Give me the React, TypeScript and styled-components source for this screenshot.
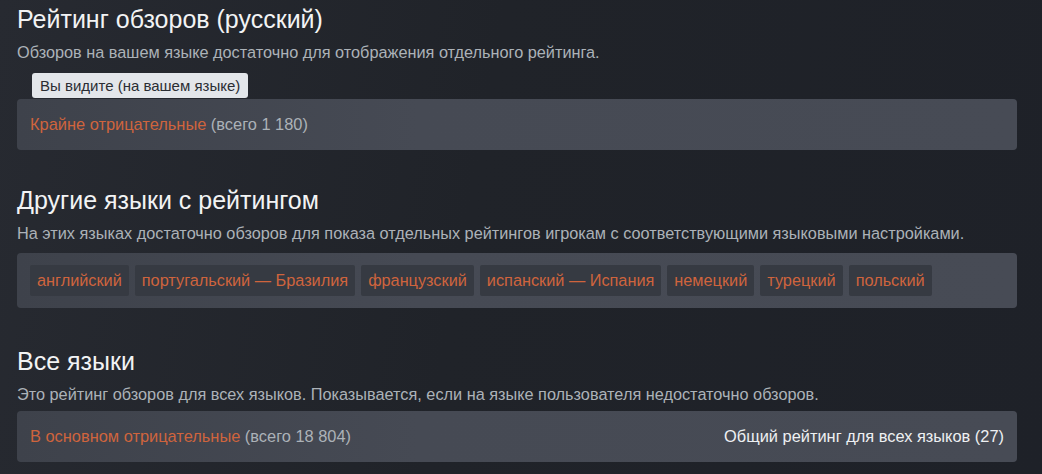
import styled, { createGlobalStyle } from "styled-components";

const GlobalStyle = createGlobalStyle`
  html, body {
    margin: 0;
    padding: 0;
    background: linear-gradient(100deg, #272a31 0%, #202329 45%, #1e2128 100%);
    min-height: 100%;
  }
  body {
    font-family: "Liberation Sans", Arial, sans-serif;
    color: #acb2b8;
  }
`;

const Page = styled.div`
  width: 1042px;
  height: 474px;
  box-sizing: border-box;
  padding: 4px 25px 0 17px;
  overflow: hidden;
`;

const Section = styled.section<{ $gap?: number }>`
  display: flex;
  flex-direction: column;
  margin-bottom: ${(p) => p.$gap ?? 0}px;
`;

const Title = styled.h2`
  margin: 0;
  font-size: 25px;
  font-weight: normal;
  line-height: 30px;
  color: #f2f3f4;
`;

const Description = styled.p<{ $after?: number }>`
  margin: 8px 0 ${(p) => p.$after ?? 0}px;
  font-size: 16.3px;
  line-height: 20px;
  color: #acb2b8;
`;

const Tooltip = styled.div`
  align-self: flex-start;
  margin: 0 0 1px 15px;
  height: 25px;
  padding: 0 8px;
  display: flex;
  align-items: center;
  font-size: 15px;
  color: #2a2d33;
  background: #e3e6ea;
  border-radius: 3px;
`;

const Panel = styled.div<{ $spread?: boolean }>`
  box-sizing: border-box;
  min-height: 51px;
  padding: 0 13px;
  display: flex;
  align-items: center;
  justify-content: ${(p) => (p.$spread ? "space-between" : "flex-start")};
  background: linear-gradient(90deg, #3e424b 0%, #464a54 40%, #474b55 100%);
  border-radius: 4px;
  font-size: 16.4px;
  color: #acb2b8;
`;

const TagPanel = styled(Panel)`
  min-height: 55px;
  flex-wrap: wrap;
  gap: 6px;
`;

const Rating = styled.span`
  color: #cf643d;
`;

const Tag = styled.span`
  height: 31px;
  padding: 0 7px;
  display: flex;
  align-items: center;
  background: #363a42;
  border-radius: 2px;
  font-size: 16.3px;
  color: #cf643d;
`;

const Overall = styled.span`
  color: #eef0f2;
`;

const languages = [
  "английский",
  "португальский — Бразилия",
  "французский",
  "испанский — Испания",
  "немецкий",
  "турецкий",
  "польский",
];

export default function App() {
  return (
    <>
      <GlobalStyle />
      <Page>
        <Section $gap={35}>
          <Title>Рейтинг обзоров (русский)</Title>
          <Description $after={11}>
            Обзоров на вашем языке достаточно для отображения отдельного рейтинга.
          </Description>
          <Tooltip>Вы видите (на вашем языке)</Tooltip>
          <Panel>
            <span>
              <Rating>Крайне отрицательные</Rating> (всего 1 180)
            </span>
          </Panel>
        </Section>
        <Section $gap={38}>
          <Title>Другие языки с рейтингом</Title>
          <Description $after={10}>
            На этих языках достаточно обзоров для показа отдельных рейтингов игрокам с
            соответствующими языковыми настройками.
          </Description>
          <TagPanel>
            {languages.map((lang) => (
              <Tag key={lang}>{lang}</Tag>
            ))}
          </TagPanel>
        </Section>
        <Section>
          <Title>Все языки</Title>
          <Description $after={7}>
            Это рейтинг обзоров для всех языков. Показывается, если на языке пользователя
            недостаточно обзоров.
          </Description>
          <Panel $spread>
            <span>
              <Rating>В основном отрицательные</Rating> (всего 18 804)
            </span>
            <Overall>Общий рейтинг для всех языков (27)</Overall>
          </Panel>
        </Section>
      </Page>
    </>
  );
}
